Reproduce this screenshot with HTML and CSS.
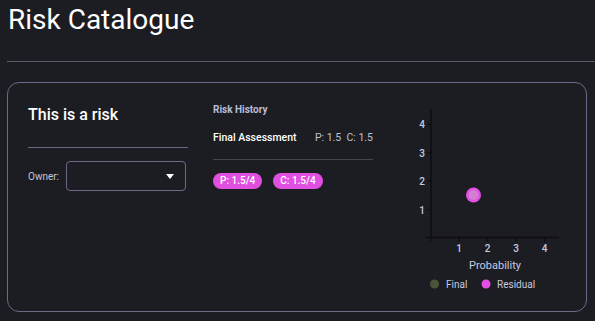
FILE: index.html
```html
<!DOCTYPE html>
<html>
<head>
    <meta charset="UTF-8">
    <link rel="stylesheet" href="styles.css">
</head>
<body>
    <h1 class="page-title">Risk Catalogue</h1>
    <div class="page-rule"></div>

    <div class="risk-card">
        <div class="risk-main">
            <h2 class="risk-title">This is a risk</h2>
            <div class="risk-rule"></div>
            <div class="owner-row">
                <label class="owner-label">Owner:</label>
                <div class="owner-select">
                    <svg class="caret" width="8" height="5" viewBox="0 0 8 5">
                        <path d="M0 0 L8 0 L4 5 Z" fill="#ffffff"/>
                    </svg>
                </div>
            </div>
        </div>

        <div class="risk-history">
            <h3 class="history-title">Risk History</h3>
            <div class="history-row">
                <span class="history-name">Final Assessment</span>
                <span class="history-values">P: 1.5&nbsp;&nbsp;C: 1.5</span>
            </div>
            <div class="history-rule"></div>
            <div class="pills">
                <span class="pill">P: 1.5/4</span>
                <span class="pill">C: 1.5/4</span>
            </div>
        </div>

        <svg class="risk-chart" width="171" height="200" viewBox="395 101 171 200">
            <!-- axes -->
            <line x1="431" y1="109" x2="431" y2="238" stroke="#0e0e12" stroke-width="1.5"/>
            <line x1="426" y1="237.5" x2="559" y2="237.5" stroke="#0e0e12" stroke-width="1.5"/>
            <!-- ticks -->
            <g stroke="#0e0e12" stroke-width="1.2">
                <line x1="427" y1="124.3" x2="431" y2="124.3"/>
                <line x1="427" y1="152.7" x2="431" y2="152.7"/>
                <line x1="427" y1="181.1" x2="431" y2="181.1"/>
                <line x1="427" y1="209.5" x2="431" y2="209.5"/>
                <line x1="430.5" y1="237" x2="430.5" y2="242"/>
                <line x1="459" y1="237" x2="459" y2="242"/>
                <line x1="487.5" y1="237" x2="487.5" y2="242"/>
                <line x1="516" y1="237" x2="516" y2="242"/>
                <line x1="544.5" y1="237" x2="544.5" y2="242"/>
            </g>
            <g class="tick-label" text-anchor="end">
                <text x="425" y="128">4</text>
                <text x="425" y="156.5">3</text>
                <text x="425" y="185">2</text>
                <text x="425" y="213.5">1</text>
            </g>
            <g class="tick-label" text-anchor="middle">
                <text x="459" y="252">1</text>
                <text x="487.5" y="252">2</text>
                <text x="516" y="252">3</text>
                <text x="544.5" y="252">4</text>
            </g>
            <text class="axis-label" x="495" y="269" text-anchor="middle">Probability</text>

            <!-- point -->
            <circle cx="473.5" cy="195" r="7.5" fill="#e34fe3"/>
            <circle cx="473.5" cy="195" r="5" fill="#d27fd2"/>

            <!-- legend -->
            <circle cx="434.5" cy="284" r="4.5" fill="#4b5639"/>
            <text class="legend-label" x="446" y="287.5">Final</text>
            <circle cx="486" cy="284" r="4.5" fill="#e34fe3"/>
            <text class="legend-label" x="497" y="287.5">Residual</text>
        </svg>
    </div>
</body>
</html>
```

FILE: styles.css
```css
body {
    margin: 0;
    background: #1c1d22;
    font-family: Roboto, 'Liberation Sans', sans-serif;
    color: #ffffff;
    overflow: hidden;
}

.page-title {
    margin: 3px 0 0 8px;
    font-size: 28px;
    font-weight: 400;
    line-height: 33px;
}

.page-rule {
    margin: 25px 0 0 7px;
    height: 1px;
    background: #5d5b6b;
}

.risk-card {
    display: flex;
    margin: 20px 0 0 7px;
    width: 580px;
    height: 230px;
    box-sizing: border-box;
    padding: 18px 20px 0 20px;
    border: 1px solid #6f6889;
    border-radius: 12px;
}

.risk-main {
    width: 160px;
    flex-shrink: 0;
}

.risk-title {
    margin: 4px 0 0;
    font-size: 16px;
    font-weight: 500;
    line-height: 19px;
}

.risk-rule {
    margin-top: 23px;
    height: 1px;
    background: #6c6780;
}

.owner-row {
    display: flex;
    align-items: center;
    gap: 7px;
    margin-top: 13px;
}

.owner-label {
    font-size: 10px;
    color: #c3c6de;
}

.owner-select {
    display: flex;
    justify-content: flex-end;
    align-items: center;
    width: 120px;
    height: 30px;
    box-sizing: border-box;
    padding-right: 11px;
    border: 1px solid #6f6889;
    border-radius: 4px;
}

.risk-history {
    width: 160px;
    flex-shrink: 0;
    margin-left: 25px;
}

.history-title {
    margin: 3px 0 0;
    font-size: 10px;
    font-weight: 700;
    line-height: 12px;
    color: #b9bdd8;
}

.history-row {
    display: flex;
    justify-content: space-between;
    margin-top: 15px;
    font-size: 10.5px;
    line-height: 13px;
    white-space: nowrap;
}

.history-name {
    font-weight: 500;
}

.history-values {
    color: #bfc0cc;
}

.history-rule {
    margin-top: 15px;
    height: 1px;
    background: #46464f;
}

.pills {
    display: flex;
    gap: 11px;
    margin-top: 13px;
}

.pill {
    padding: 0 7px;
    border-radius: 8px;
    background: #e04fe0;
    font-size: 10px;
    font-weight: 500;
    line-height: 16px;
}

.risk-chart {
    margin-left: 22px;
    flex-shrink: 0;
}

.tick-label {
    font-size: 10px;
    font-weight: 500;
    fill: #c6cae0;
}

.axis-label {
    font-size: 11px;
    fill: #c6cae0;
}

.legend-label {
    font-size: 10px;
    fill: #c6cae0;
}
```
